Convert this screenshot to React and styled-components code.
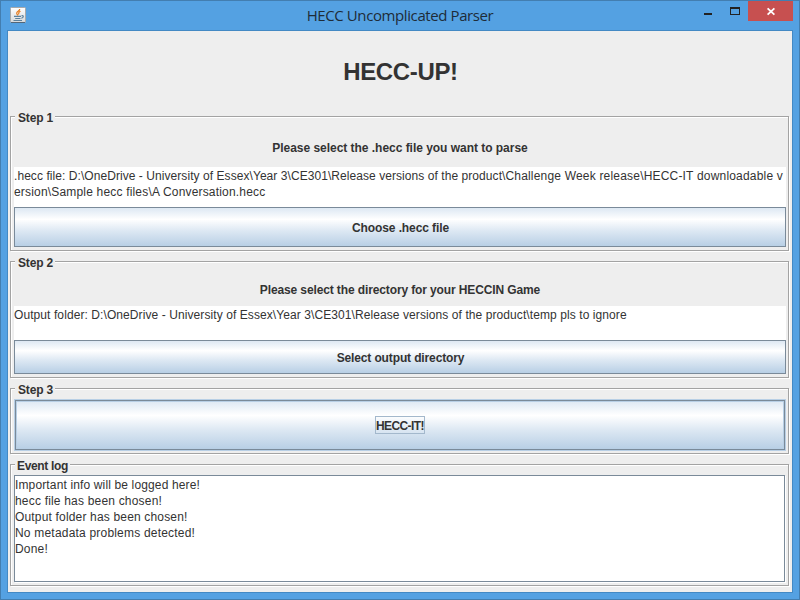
import React from "react";
import styled, { createGlobalStyle } from "styled-components";

const GlobalStyle = createGlobalStyle`
  * { box-sizing: border-box; }
  body { margin: 0; overflow: hidden; }
`;

const Window = styled.div`
  width: 800px;
  height: 600px;
  display: flex;
  flex-direction: column;
  align-items: center;
  background: #54a1e2;
  border: 1px solid #437eb0;
  font-family: "Liberation Sans", Arial, sans-serif;
  font-size: 12px;
  color: #333;
`;

const TitleBar = styled.header`
  width: 798px;
  height: 29px;
  flex: none;
  display: grid;
  grid-template-columns: 120px 1fr 120px;
`;

const AppIcon = styled.svg`
  display: block;
  margin: 6px 0 0 9px;
`;

const WindowTitle = styled.div`
  font-family: "Open Sans", "Noto Sans", sans-serif;
  font-size: 15px;
  line-height: 29px;
  letter-spacing: -0.4px;
  text-align: center;
  white-space: nowrap;
  color: #1e2c38;
`;

const Controls = styled.div`
  display: flex;
  align-items: flex-start;
  justify-content: flex-end;
  padding-right: 6px;
`;

const ControlButton = styled.button`
  width: ${(p) => p.$width}px;
  height: 20px;
  padding: 0;
  border: 0;
  background: ${(p) => (p.$danger ? "#c75050" : "transparent")};
  svg { display: block; }
`;

const Content = styled.main`
  width: 786px;
  height: 563px;
  flex: none;
  border: 1px solid #4389c4;
  background: #eee;
  padding: 0 2px;
  display: flex;
  flex-direction: column;
  gap: 10px;
`;

const Heading = styled.h1`
  flex: none;
  margin: 0;
  height: 75px;
  line-height: 82px;
  padding-left: 1px;
  font-size: 24px;
  letter-spacing: -0.35px;
  text-align: center;
`;

const Group = styled.section`
  flex: none;
  width: 779px;
  height: ${(p) => p.$height}px;
  border: 1px solid #a3a3a3;
  box-shadow: 1px 1px 0 #fff, inset 1px 1px 0 #fff;
  padding: 0 2px 0 3px;
  display: flex;
  flex-direction: column;
`;

const Legend = styled.h2`
  flex: none;
  width: ${(p) => p.$width}px;
  height: 14px;
  margin: -6px 0 0 1px;
  padding-left: ${(p) => p.$indent ?? 3}px;
  background: #eee;
  font-size: 12px;
  line-height: 14px;
  letter-spacing: ${(p) => p.$spacing ?? -0.15}px;
  white-space: nowrap;
`;

const Prompt = styled.div`
  flex: none;
  height: ${(p) => p.$height}px;
  padding-top: ${(p) => p.$top}px;
  line-height: 14px;
  font-weight: bold;
  letter-spacing: ${(p) => p.$spacing}px;
  text-align: center;
`;

const PathField = styled.div`
  flex: none;
  width: 772px;
  height: ${(p) => p.$height}px;
  padding-top: 1px;
  background: #fff;
`;

const Line = styled.div`
  height: 16px;
  line-height: 16px;
  letter-spacing: ${(p) => p.$spacing ?? 0}px;
  white-space: nowrap;
`;

const Run = styled.span`
  letter-spacing: ${(p) => p.$spacing}px;
`;

const MetalButton = styled.button`
  flex: none;
  width: 772px;
  height: ${(p) => p.$height}px;
  padding: 1px 0 0 1px;
  border: 1px solid #7a8a99;
  background: linear-gradient(#dde8f3, #fff 30%, #dde8f3 60%, #b8cfe5);
  color: #333;
  font: bold 12px "Liberation Sans", Arial, sans-serif;
  letter-spacing: ${(p) => p.$spacing ?? 0}px;
`;

const DefaultButton = styled(MetalButton)`
  width: 770px;
  margin: 3px 0 0 1px;
  box-shadow: 0 0 0 1px #b8cfe5, inset 0 0 0 1px #b8cfe5;
  padding: 0;
  outline: none;
`;

const FocusLabel = styled.span`
  display: inline-block;
  width: 50px;
  height: 18px;
  line-height: 18px;
  border: 1px solid #a3b8cc;
  text-align: left;
  white-space: nowrap;
`;

const Log = styled.div`
  width: 771px;
  height: 107px;
  margin-top: 2px;
  padding-top: 1px;
  border: 1px solid #7a8a99;
  box-shadow: 1px 1px 0 #fff;
  background: #fff;
`;

const logLines = [
  ["Important info will be logged here!", 0.14],
  ["hecc file has been chosen!", 0.19],
  ["Output folder has been chosen!", 0.17],
  ["No metadata problems detected!", 0.2],
  ["Done!", 0.2],
];

function JavaIcon() {
  return (
    <AppIcon width="16" height="16" viewBox="0 0 16 16">
      <defs>
        <linearGradient id="tile" x1="0" y1="0" x2="0" y2="1">
          <stop offset="0" stopColor="#fff" />
          <stop offset="1" stopColor="#d5d8db" />
        </linearGradient>
      </defs>
      <rect x=".5" y=".5" width="15" height="15" rx="1" fill="url(#tile)" stroke="#a7a9aa" />
      <path d="M1 15.5h14" stroke="#536779" />
      <path d="M9.7 2C10 4 6.3 4.5 6.7 6.3C6.9 7.3 7.6 7.7 7.9 8.5M10.5 4.3C8.6 5.2 8.2 6 9 7.4" fill="none" stroke="#e77d1e" strokeWidth="1.2" />
      <path d="M4 9.4h7M5.2 11.5h5.3M3.5 13.5h8.5M11.5 8.7c2.6-.5 2.2 2-.2 2.5" fill="none" stroke="#5c819c" strokeWidth="1.1" />
    </AppIcon>
  );
}

export default function App() {
  return (
    <>
      <GlobalStyle />
      <Window>
        <TitleBar>
          <JavaIcon />
          <WindowTitle>HECC Uncomplicated Parser</WindowTitle>
          <Controls>
            <ControlButton $width={27} aria-label="Minimize">
              <svg width="27" height="20"><rect x="3" y="12" width="8" height="2" fill="#222" /></svg>
            </ControlButton>
            <ControlButton $width={20} aria-label="Maximize">
              <svg width="20" height="20" shapeRendering="crispEdges">
                <path fillRule="evenodd" d="M2 6h10v8H2zM3 8v5h8V8z" fill="#222" />
              </svg>
            </ControlButton>
            <ControlButton $width={45} $danger aria-label="Close">
              <svg width="45" height="20">
                <path d="M19.6 7.4l6.8 6.2M26.4 7.4l-6.8 6.2" stroke="#fff" strokeWidth="1.8" />
              </svg>
            </ControlButton>
          </Controls>
        </TitleBar>
        <Content>
          <Heading>HECC-UP!</Heading>
          <Group $height={135}>
            <Legend $width={40}>Step 1</Legend>
            <Prompt $height={42} $top={16} $spacing={-0.03}>Please select the .hecc file you want to parse</Prompt>
            <PathField $height={40}>
              <Line>
                <Run $spacing={0.062}>.hecc file: D:\OneDrive - University of Essex\Year 3\CE301\Release versions of the product\</Run>
                <Run $spacing={0.19}>Challenge Week release\HECC-IT downloadable v</Run>
              </Line>
              <Line $spacing={0.18}>ersion\Sample hecc files\A Conversation.hecc</Line>
            </PathField>
            <MetalButton $height={40} $spacing={-0.1}>Choose .hecc file</MetalButton>
          </Group>
          <Group $height={117}>
            <Legend $width={40}>Step 2</Legend>
            <Prompt $height={36} $top={13} $spacing={-0.12}>Please select the directory for your HECCIN Game</Prompt>
            <PathField $height={34}>
              <Line $spacing={0.085}>Output folder: D:\OneDrive - University of Essex\Year 3\CE301\Release versions of the product\temp pls to ignore</Line>
            </PathField>
            <MetalButton $height={34} $spacing={-0.13}>Select output directory</MetalButton>
          </Group>
          <Group $height={66}>
            <Legend $width={40}>Step 3</Legend>
            <DefaultButton $height={50} $spacing={-0.6}><FocusLabel>HECC-IT!</FocusLabel></DefaultButton>
          </Group>
          <Group $height={122}>
            <Legend $width={55} $indent={2} $spacing={-0.33}>Event log</Legend>
            <Log>
              {logLines.map(([text, spacing]) => (
                <Line key={text} $spacing={spacing}>{text}</Line>
              ))}
            </Log>
          </Group>
        </Content>
      </Window>
    </>
  );
}
